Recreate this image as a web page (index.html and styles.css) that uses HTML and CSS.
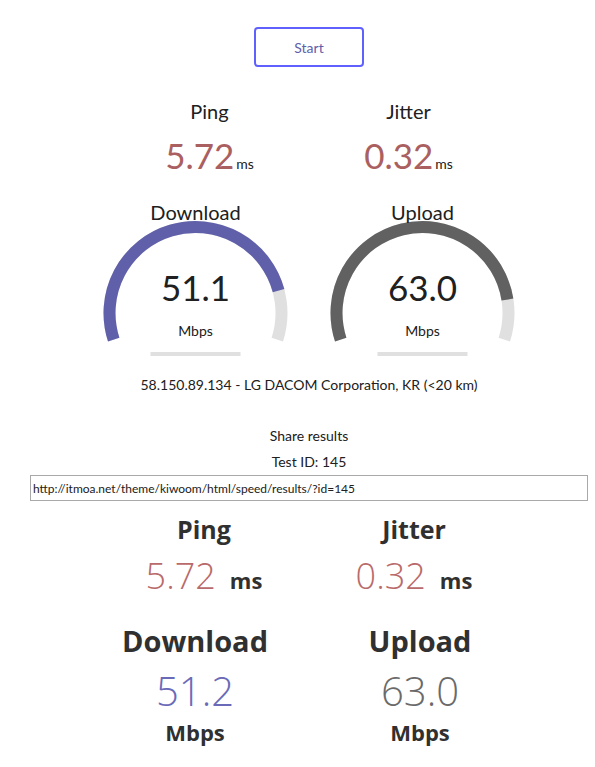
FILE: index.html
```html
<!DOCTYPE html>
<html lang="en">
  <head>
    <meta charset="UTF-8" />
    <meta name="viewport" content="width=device-width, initial-scale=1.0" />
    <title>Speed Test</title>
    <link rel="stylesheet" href="styles.css">
  </head>
  <body>
    <div id="test">
      <div class="start-row">
        <button id="startStopBtn">Start</button>
      </div>

      <div class="test-group small">
        <div class="test-area">
          <div class="test-name">Ping</div>
          <div class="value-line"><span class="meter-text ping">5.72</span><span class="unit">ms</span></div>
        </div>
        <div class="test-area">
          <div class="test-name">Jitter</div>
          <div class="value-line"><span class="meter-text ping">0.32</span><span class="unit">ms</span></div>
        </div>
      </div>

      <div class="test-group gauges">
        <div class="gauge">
          <svg class="meter" width="227" height="160" viewBox="0 0 227 160">
            <path d="M 31.71 140.58 A 86 86 0 1 1 195.29 140.58" fill="none" stroke="#e0e0e0" stroke-width="12" />
            <path d="M 31.71 140.58 A 86 86 0 1 1 196.55 91.67" fill="none" stroke="#6060aa" stroke-width="12" />
            <rect x="68.5" y="153" width="90" height="4" fill="#e0e0e0" />
          </svg>
          <div class="gauge-text">
            <div class="test-name">Download</div>
            <div class="meter-text big">51.1</div>
            <div class="unit">Mbps</div>
          </div>
        </div>
        <div class="gauge">
          <svg class="meter" width="227" height="160" viewBox="0 0 227 160">
            <path d="M 31.71 140.58 A 86 86 0 1 1 195.29 140.58" fill="none" stroke="#e0e0e0" stroke-width="12" />
            <path d="M 31.71 140.58 A 86 86 0 1 1 198.44 100.55" fill="none" stroke="#616161" stroke-width="12" />
            <rect x="68.5" y="153" width="90" height="4" fill="#e0e0e0" />
          </svg>
          <div class="gauge-text">
            <div class="test-name">Upload</div>
            <div class="meter-text big">63.0</div>
            <div class="unit">Mbps</div>
          </div>
        </div>
      </div>

      <div id="ipArea">58.150.89.134 - LG DACOM Corporation, KR (&lt;20 km)</div>

      <div id="shareArea">
        <div class="share-title">Share results</div>
        <div class="test-id">Test ID: <span>145</span></div>
        <input type="text" id="resultsURL" value="http://itmoa.net/theme/kiwoom/html/speed/results/?id=145" readonly />
      </div>

      <div id="resultsImg">
        <div class="res-row top">
          <div class="res-cell">
            <div class="res-name">Ping</div>
            <div class="res-value"><span class="num ping">5.72</span><span class="res-unit">ms</span></div>
          </div>
          <div class="res-cell">
            <div class="res-name">Jitter</div>
            <div class="res-value"><span class="num ping">0.32</span><span class="res-unit">ms</span></div>
          </div>
        </div>
        <div class="res-row bottom">
          <div class="res-cell">
            <div class="res-name big">Download</div>
            <div class="num dl">51.2</div>
            <div class="res-unit block">Mbps</div>
          </div>
          <div class="res-cell">
            <div class="res-name big">Upload</div>
            <div class="num ul">63.0</div>
            <div class="res-unit block">Mbps</div>
          </div>
        </div>
      </div>
    </div>
  </body>
</html>
```

FILE: styles.css
```css
body {
  margin: 0;
  font-family: Lato, "Noto Sans", sans-serif;
  color: #202020;
  background: #fff;
}
#test {
  width: 558px;
  margin-left: 30px;
  text-align: center;
}
.start-row {
  padding-top: 27px;
}
#startStopBtn {
  width: 110px;
  height: 40px;
  border: 2px solid #6060ff;
  border-radius: 4px;
  background: #fff;
  color: #6060aa;
  font-family: Lato, sans-serif;
  font-size: 14px;
  cursor: pointer;
}
.test-group {
  display: flex;
  justify-content: center;
}
.small {
  margin-top: 32px;
}
.test-area {
  width: 199px;
}
.test-name {
  font-size: 20px;
  line-height: 24px;
  color: #202020;
}
.value-line {
  margin-top: 12px;
  line-height: 40px;
}
.meter-text {
  font-size: 35px;
}
.meter-text.ping {
  color: #aa6060;
}
.unit {
  font-size: 14px;
  margin-left: 2px;
}
.gauges {
  margin-top: 15px;
}
.gauge {
  width: 227px;
  display: grid;
}
.gauge .meter,
.gauge .gauge-text {
  grid-area: 1 / 1;
}
.gauge-text {
  display: flex;
  flex-direction: column;
  align-items: center;
}
.gauge-text .test-name {
  line-height: 26px;
}
.meter-text.big {
  margin-top: 42px;
  line-height: 40px;
  color: #202020;
}
.gauge-text .unit {
  margin: 15px 0 0;
}
#ipArea {
  margin-top: 16px;
  font-size: 14px;
  line-height: 20px;
}
#shareArea {
  margin-top: 28px;
  font-size: 14px;
}
.share-title,
.test-id {
  line-height: 26px;
}
#resultsURL {
  display: block;
  width: 100%;
  box-sizing: border-box;
  height: 26px;
  margin: 0;
  padding: 0 2px;
  border: 1px solid #a9a9a9;
  font-family: Lato, sans-serif;
  font-size: 12px;
  color: #202020;
}
#resultsImg {
  font-family: "Open Sans", sans-serif;
  color: #303030;
  padding-top: 10px;
}
.res-row {
  display: grid;
  justify-content: center;
}
.res-row.top {
  grid-template-columns: 210px 210px;
}
.res-row.bottom {
  grid-template-columns: 225px 225px;
  padding-right: 3px;
}
.res-name {
  font-weight: 700;
  font-size: 25px;
  line-height: 36px;
}
.res-value {
  margin-top: 5px;
}
.res-name.big {
  font-size: 29px;
  line-height: 40px;
  margin-top: 21px;
}
.num {
  font-weight: 300;
  font-size: 36px;
  line-height: 48px;
}
.num.ping {
  color: #b96a6a;
}
.num.dl {
  color: #6a6ab8;
  font-size: 40px;
  margin-top: 6px;
}
.num.ul {
  color: #6a6a6a;
  font-size: 40px;
  margin-top: 6px;
}
.res-unit {
  font-weight: 700;
  font-size: 22px;
  margin-left: 14px;
}
.res-unit.block {
  display: block;
  margin-left: 0;
  margin-top: -1px;
  line-height: 36px;
}
```
